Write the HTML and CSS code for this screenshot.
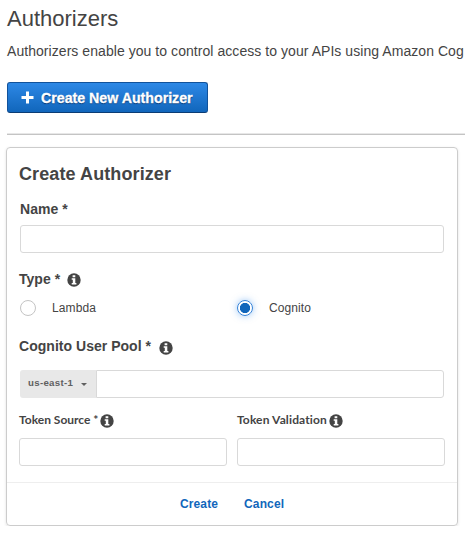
FILE: index.html
```html
<!DOCTYPE html>
<html lang="en">
<head>
<meta charset="utf-8">
<title>Authorizers</title>
<link rel="stylesheet" href="styles.css">
</head>
<body>
<svg class="defs" aria-hidden="true">
  <symbol id="info" viewBox="0 0 14 14">
    <circle cx="7" cy="7" r="6.7" fill="#444"/>
    <path fill="#fff" d="M5.6 2.3h2.7v2H5.6zM4.7 5.3h3.6v4.6h1.1v1.5H4.7V9.9h1.1V6.8H4.7z"/>
  </symbol>
</svg>
<main class="page">
  <h1 class="page-title">Authorizers</h1>
  <p class="intro">Authorizers enable you to control access to your APIs using Amazon Cog</p>
  <button class="primary" type="button">
    <svg class="plus" viewBox="0 0 13 13"><path fill="#fff" d="M5 .5h3v4.4h4.5v3H8v4.6H5V7.9H.5v-3H5z"/></svg>
    <span>Create New Authorizer</span>
  </button>
  <hr class="rule">
  <form class="card">
    <div class="card-body">
      <h2 class="card-title">Create Authorizer</h2>
      <label class="label name-label" for="name">Name *</label>
      <input class="field name-field" id="name" type="text">
      <div class="label type-label">Type * <svg class="info"><use href="#info"/></svg></div>
      <div class="choices">
        <label class="choice"><input class="radio" type="radio" name="type"><span>Lambda</span></label>
        <label class="choice"><input class="radio" type="radio" name="type" checked><span>Cognito</span></label>
      </div>
      <div class="label pool-label">Cognito User Pool * <svg class="info"><use href="#info"/></svg></div>
      <div class="pool">
        <button class="region" type="button"><span>us-east-1</span><i class="caret"></i></button>
        <input class="field pool-field" type="text" aria-label="Cognito User Pool">
      </div>
      <div class="tokens">
        <div class="token">
          <div class="token-label"><span class="source-text">Token Source *</span><svg class="info"><use href="#info"/></svg></div>
          <input class="field" type="text" aria-label="Token Source">
        </div>
        <div class="token">
          <div class="token-label"><span class="validation-text">Token Validation</span><svg class="info"><use href="#info"/></svg></div>
          <input class="field" type="text" aria-label="Token Validation">
        </div>
      </div>
    </div>
    <div class="actions">
      <a class="action">Create</a>
      <a class="action">Cancel</a>
    </div>
  </form>
</main>
</body>
</html>
```
FILE: styles.css
```css
* { box-sizing: border-box; }
html { overflow: hidden; }
body {
  margin: 0;
  background: #fff;
  color: #444;
  font-family: "Liberation Sans", Arial, sans-serif;
  overflow: hidden;
}
.defs { display: none; }
.page { padding: 6px 0 0 7px; }
.page-title {
  margin: 0;
  font-size: 22px;
  font-weight: 400;
  line-height: 25px;
}
.intro {
  margin: 12px 0 0;
  font-size: 14px;
  letter-spacing: .055px;
  line-height: 16px;
  white-space: nowrap;
}
.primary {
  display: flex;
  align-items: center;
  width: 201px;
  height: 31px;
  margin-top: 23px;
  padding: 1px 0 0 13px;
  border: 1px solid #11529b;
  border-bottom-color: #0b3c74;
  border-radius: 3px;
  background: linear-gradient(#2d88e6, #1166bb);
  color: #fff;
  font: bold 14.2px "Liberation Sans", Arial, sans-serif;
  text-shadow: 0 1px 1px rgba(0, 20, 60, .65);
  -webkit-text-stroke: .3px #fff;
  white-space: nowrap;
}
.plus {
  width: 13px;
  height: 13px;
  margin: -2px 7px 0 0;
}
.rule {
  height: 2px;
  margin: 20px 0 0;
  border: 0;
  border-top: 1px solid #e7e7e7;
  background: #c4c4c4;
}
.card {
  width: 452px;
  height: 379px;
  margin: 12px 0 0 -1px;
  border: 1px solid #ccc;
  border-radius: 4px;
  box-shadow: 0 1px 3px rgba(0, 0, 0, .12);
}
.card-body {
  height: 335px;
  padding: 16px 13px 0 12px;
  border-bottom: 1px solid #eee;
}
.card-title {
  margin: 0;
  font-size: 18px;
  letter-spacing: .1px;
  line-height: 21px;
}
.label {
  display: flex;
  align-items: center;
  height: 16px;
  font-size: 14px;
  font-weight: 700;
  letter-spacing: .03px;
  line-height: 16px;
}
.name-label { margin: 16px 0 0 1px; }
.info {
  flex: none;
  width: 14px;
  height: 14px;
}
.field {
  display: block;
  width: 100%;
  height: 28px;
  padding: 0 8px;
  border: 1px solid #d9d9d9;
  border-radius: 3px;
  background: #fff;
}
.name-field {
  width: 424px;
  margin: 8px 0 0 1px;
}
.type-label { margin-top: 18px; }
.type-label .info { margin: 2px 0 0 7px; }
.choices {
  display: grid;
  grid-template-columns: 217px 1fr;
  margin: 13px 0 0 1px;
}
.choice {
  display: flex;
  align-items: center;
  gap: 16px;
  height: 16px;
  font-size: 12px;
  letter-spacing: .1px;
}
.radio {
  appearance: none;
  width: 16px;
  height: 16px;
  margin: 0;
  border: 1px solid #c4c4c4;
  border-radius: 50%;
}
.radio:checked {
  border-color: #3482d8;
  background: radial-gradient(circle, #1166bb 4.8px, #fff 5.4px);
  box-shadow: 0 0 7px rgba(60, 145, 240, .5);
}
.pool-label { margin-top: 22px; }
.pool-label .info { margin: 4px 0 0 8px; }
.pool {
  display: flex;
  width: 424px;
  margin: 16px 0 0 1px;
}
.region {
  display: flex;
  align-items: center;
  width: 76px;
  height: 28px;
  padding: 0 0 3px 8px;
  border: 0;
  border-radius: 3px 0 0 3px;
  background: #e8e8e8;
  color: #606060;
  font: bold 9.7px "Liberation Sans", Arial, sans-serif;
  letter-spacing: .3px;
}
.caret {
  margin: 3px 0 0 8px;
  border: 3px solid transparent;
  border-top-color: #606060;
  border-bottom: 0;
}
.pool-field {
  width: 348px;
  border-radius: 0 3px 3px 0;
}
.tokens {
  display: grid;
  grid-template-columns: 208px 208px;
  gap: 10px;
  margin-top: 14px;
}
.token-label {
  display: flex;
  align-items: center;
  height: 15px;
  margin-bottom: 11px;
  font: bold 12px/15px Lato, sans-serif;
}
.validation-text { letter-spacing: .12px; }
.token-label .info { margin: 2px 0 0 2px; }
.actions {
  display: flex;
  gap: 26px;
  padding: 14px 0 0 173px;
}
.action {
  color: #1166bb;
  font-size: 12px;
  font-weight: 700;
  letter-spacing: .12px;
  line-height: 14px;
}
```
